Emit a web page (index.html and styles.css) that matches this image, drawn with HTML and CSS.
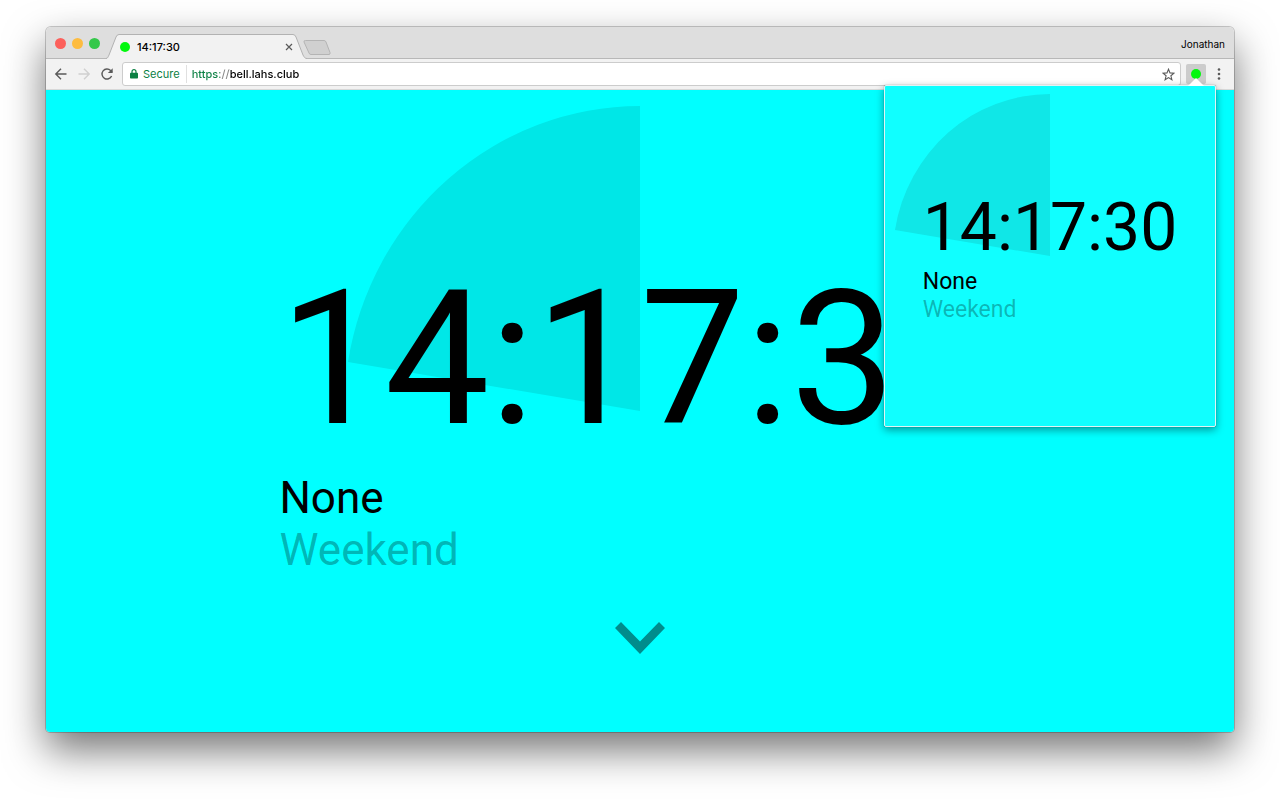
FILE: index.html
```html
<!DOCTYPE html>
<html lang="en">
<head>
<meta charset="utf-8">
<meta name="viewport" content="width=device-width, initial-scale=1">
<title>14:17:30</title>
<link rel="stylesheet" href="styles.css">
</head>
<body>
<div class="window">
  <header class="tabstrip">
    <div class="lights">
      <button class="light light-close" aria-label="Close window"></button>
      <button class="light light-min" aria-label="Minimise window"></button>
      <button class="light light-max" aria-label="Zoom window"></button>
    </div>
    <div class="tab">
      <svg class="tab-shape" viewBox="0 0 201 25" preserveAspectRatio="none" aria-hidden="true">
        <path d="M0 25C2 24 2 23 3 21L10 3Q11 .5 13 .5H187Q189 .5 190 3L197 21C198 23 199 24 201 25Z" fill="#f2f2f2"/>
        <path d="M0 24.5C2 24 2 23 3 21L10 3Q11 .5 13 .5H187Q189 .5 190 3L197 21C198 23 199 24.500 201 24.500" fill="none" stroke="#b2b2b2"/>
      </svg>
      <span class="dot"></span>
      <span class="tab-title">14:17:30</span>
      <button class="tab-close" aria-label="Close tab">
        <svg width="8" height="8" viewBox="0 0 8 8"><path d="M1 1l6 6M7 1L1 7" stroke="#5a5a5a" stroke-width="1.200" fill="none"/></svg>
      </button>
    </div>
    <button class="new-tab" aria-label="New tab">
      <svg width="28" height="15" viewBox="0 0 28 15"><path d="M2.500 .5H21Q22.500 .5 23 2L27 12.500Q27.500 14.500 26 14.500H8Q6.500 14.500 6 13L1 2Q.5 .5 2.500 .5Z" fill="#d0d0d0" stroke="#b4b4b4"/></svg>
    </button>
    <button class="profile">Jonathan</button>
  </header>

  <nav class="toolbar">
    <button class="tool" aria-label="Back">
      <svg width="14" height="14" viewBox="0 0 14 14"><path d="M12.500 7H2M7 1.800L1.800 7L7 12.200" fill="none" stroke="#5a5a5a" stroke-width="1.400"/></svg>
    </button>
    <button class="tool" aria-label="Forward" disabled>
      <svg width="14" height="14" viewBox="0 0 14 14"><path d="M1.500 7H12M7 1.800L12.200 7L7 12.200" fill="none" stroke="#d0d0d0" stroke-width="1.400"/></svg>
    </button>
    <button class="tool" aria-label="Reload">
      <svg width="14" height="14" viewBox="0 0 14 14"><path d="M11.600 9A5 5 0 1 1 10.600 3.500L12 5" fill="none" stroke="#5a5a5a" stroke-width="1.400"/><path d="M12.700 1.200V6H7.900Z" fill="#5a5a5a"/></svg>
    </button>
    <div class="omnibox">
      <svg width="8" height="10" viewBox="0 0 8 10" aria-hidden="true"><path d="M2 4.500V2.700a2 2 0 0 1 4 0V4.500" fill="none" stroke="#0b8043" stroke-width="1.200"/><rect y="3.700" width="8" height="5.800" rx=".8" fill="#0b8043"/></svg>
      <span class="secure">Secure</span>
      <input class="url" type="text" aria-label="Address" value="https://bell.lahs.club" spellcheck="false">
      <button class="star" aria-label="Bookmark this page">
        <svg width="13" height="13" viewBox="0 0 13 13"><path d="M6.500 1.200L8 4.900L12 5.200L8.900 7.800L9.900 11.700L6.500 9.600L3.100 11.700L4.100 7.800L1 5.200L5 4.900Z" fill="none" stroke="#5a5a5a" stroke-width="1.100"/></svg>
      </button>
    </div>
    <div class="extension">
      <button class="ext-button" aria-label="Bell schedule"><span class="dot"></span></button>
      <svg class="popup-arrow" width="16" height="8" viewBox="0 0 16 8" aria-hidden="true"><path d="M0 8L8 0L16 8Z" fill="#fff"/></svg>
      <section class="popup" aria-label="Bell schedule popup">
        <svg class="popup-wedge" viewBox="0 0 155 162" aria-hidden="true"><path d="M155 162V0A157 162 0 0 0 0 136Z" fill="#10e7e7"/></svg>
        <div class="clock">
          <div class="popup-time">14:17:30</div>
          <div class="popup-line">None</div>
          <div class="popup-line muted">Weekend</div>
        </div>
      </section>
    </div>
    <button class="menu" aria-label="Menu">
      <svg width="4" height="12" viewBox="0 0 4 12"><g fill="#5a5a5a"><circle cx="2" cy="1.500" r="1.300"/><circle cx="2" cy="6" r="1.300"/><circle cx="2" cy="10.500" r="1.300"/></g></svg>
    </button>
  </nav>

  <main class="page">
    <svg class="wedge" viewBox="0 0 292 305" aria-hidden="true"><path d="M292 305V0A296 305 0 0 0 0 256Z" fill="#00e7e7"/></svg>
    <div class="clock">
      <div class="time">14:17:30</div>
      <div class="line">None</div>
      <div class="line muted">Weekend</div>
    </div>
    <button class="more" aria-label="Show schedule">
      <svg width="50" height="32" viewBox="0 0 50 32"><path d="M6 0L25 19.500L44 0L50 6L25 32L0 6Z" fill="#008c8c"/></svg>
    </button>
  </main>
</div>
</body>
</html>
```

FILE: styles.css
```css
* { box-sizing: border-box; }

body {
  margin: 0;
  min-height: 100vh;
  padding: 27px 46px 68px;
  display: flex;
  background: #fff;
  font-family: Inter, "Liberation Sans", sans-serif;
  font-size: 11px;
  font-weight: 500;
  color: #000;
}

button {
  display: flex;
  align-items: center;
  justify-content: center;
  padding: 0;
  border: 0;
  background: none;
  font: inherit;
  color: inherit;
}

svg { display: block; }

.window {
  flex: 1;
  min-width: 0;
  display: flex;
  flex-direction: column;
  border-radius: 5px 5px 4px 4px;
  box-shadow: 0 0 0 1px rgba(0, 0, 0, .2), 0 18px 40px rgba(0, 0, 0, .55);
}

.tabstrip {
  height: 32px;
  display: flex;
  align-items: flex-end;
  background: #dedede;
  border-bottom: 1px solid #b8b8b8;
  border-radius: 5px 5px 0 0;
}

.lights {
  display: flex;
  gap: 6px;
  align-self: center;
  padding: 1px 6px 0 9px;
}

.light {
  width: 11px;
  height: 11px;
  border-radius: 50%;
}

.light-close { background: #fc605b; }
.light-min { background: #fdbc40; }
.light-max { background: #34c84a; }

.tab {
  position: relative;
  width: 201px;
  height: 25px;
  margin-bottom: -1px;
  display: flex;
  align-items: center;
  padding: 0 12px 0 14px;
}

.tab-shape {
  position: absolute;
  inset: 0;
  width: 100%;
  height: 100%;
}

.dot {
  position: relative;
  width: 10px;
  height: 10px;
  border-radius: 50%;
  background: #00f80c;
}

.tab-title {
  position: relative;
  flex: 1;
  padding-left: 7px;
}

.tab-close {
  position: relative;
  width: 12px;
  height: 12px;
}

.new-tab {
  margin: 0 0 3px -4px;
}

.profile {
  align-self: center;
  margin-left: auto;
  padding: 2px 9px 0 0;
  font-size: 10px;
  font-weight: 400;
}

.toolbar {
  height: 31px;
  display: flex;
  align-items: center;
  background: #f2f2f2;
  border-bottom: 1px solid #d8d8d8;
  padding: 0 13px 0 3px;
}

.tool {
  width: 23px;
  height: 23px;
}

.omnibox {
  flex: 1;
  height: 24px;
  display: flex;
  align-items: center;
  margin: 0 5px 0 4px;
  padding: 0 5px 0 7px;
  background: #fff;
  border: 1px solid #ccc;
  border-radius: 3px;
}

.secure {
  margin-left: 5px;
  padding-right: 6px;
  border-right: 1px solid #e0e0e0;
  line-height: 18px;
  font-weight: 400;
  color: #0b8043;
}

.url {
  flex: 1;
  min-width: 0;
  padding: 0 0 0 5px;
  border: 0;
  outline: 0;
  font: inherit;
  line-height: 18px;
  color: transparent;
  background: linear-gradient(to right, #0b8043 33px, #888 33px, #888 42px, #000 42px);
  background-clip: text;
  -webkit-background-clip: text;
}

.star { width: 14px; height: 18px; }

.extension { position: relative; }

.ext-button {
  width: 20px;
  height: 20px;
  border-radius: 2px;
  background: #ccc;
}

.popup-arrow {
  position: absolute;
  left: 2px;
  top: 14px;
  z-index: 3;
}

.popup {
  position: absolute;
  z-index: 2;
  top: 21px;
  right: -10px;
  width: 332px;
  height: 342px;
  padding-top: 102px;
  display: flex;
  flex-direction: column;
  align-items: center;
  background: #10ffff;
  border: 1px solid #e0f4f4;
  border-radius: 2px;
  box-shadow: 0 0 1px rgba(0, 0, 0, .5), 0 3px 9px rgba(0, 0, 0, .4);
}

.popup-wedge {
  position: absolute;
  top: 8px;
  right: 50%;
  width: 155px;
  height: 162px;
}

.menu { margin-left: 11px; }

.clock {
  position: relative;
  font-family: Roboto, sans-serif;
  font-weight: 400;
}

.popup-time {
  font-size: 66px;
  line-height: 80px;
}

.popup-line {
  font-size: 23px;
  line-height: 28px;
}

.page {
  flex: 1;
  position: relative;
  display: flex;
  flex-direction: column;
  align-items: center;
  padding-top: 158px;
  background: #0ff;
  border-radius: 0 0 4px 4px;
  overflow: hidden;
}

.wedge {
  position: absolute;
  top: 16px;
  right: 50%;
  width: 292px;
  height: 305px;
}

.time {
  font-size: 187px;
  line-height: 224px;
}

.line {
  font-size: 44px;
  line-height: 52px;
}

.muted { color: rgba(0, 0, 0, .3); }

.more { margin-top: 46px; }
```
